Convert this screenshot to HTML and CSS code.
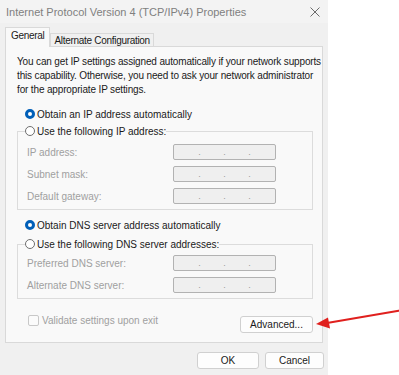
FILE: index.html
```html
<!DOCTYPE html>
<html lang="en">
<head>
    <meta charset="UTF-8">
    <title>Internet Protocol Version 4 (TCP/IPv4) Properties</title>
    <link rel="stylesheet" href="styles.css">
</head>
<body>
    <div class="window">
        <div class="titlebar">
            <span class="title">Internet Protocol Version 4 (TCP/IPv4) Properties</span>
            <svg class="close" width="10" height="10" viewBox="0 0 10 10">
                <path d="M0.5 0.5 L9.5 9.5 M9.5 0.5 L0.5 9.5" stroke="#6b6b6b" stroke-width="1" fill="none"/>
            </svg>
        </div>

        <div class="tabs">
            <div class="tab active">General</div>
            <div class="tab">Alternate Configuration</div>
        </div>

        <div class="panel">
            <p class="intro">You can get IP settings assigned automatically if your network supports<br>this capability. Otherwise, you need to ask your network administrator<br>for the appropriate IP settings.</p>

            <!-- IP address -->
            <div class="option">
                <span class="radio checked"></span>Obtain an IP address automatically
            </div>
            <fieldset class="group">
                <legend><span class="radio"></span>Use the following IP address:</legend>
                <div class="field"><label>IP address:</label><div class="ipbox"><span>.</span><span>.</span><span>.</span></div></div>
                <div class="field"><label>Subnet mask:</label><div class="ipbox"><span>.</span><span>.</span><span>.</span></div></div>
                <div class="field"><label>Default gateway:</label><div class="ipbox"><span>.</span><span>.</span><span>.</span></div></div>
            </fieldset>

            <!-- DNS -->
            <div class="option dns">
                <span class="radio checked"></span>Obtain DNS server address automatically
            </div>
            <fieldset class="group dns-group">
                <legend><span class="radio"></span>Use the following DNS server addresses:</legend>
                <div class="field"><label>Preferred DNS server:</label><div class="ipbox"><span>.</span><span>.</span><span>.</span></div></div>
                <div class="field"><label>Alternate DNS server:</label><div class="ipbox"><span>.</span><span>.</span><span>.</span></div></div>
            </fieldset>

            <div class="footer-row">
                <div class="validate"><span class="checkbox"></span>Validate settings upon exit</div>
                <button class="btn">Advanced...</button>
            </div>
        </div>

        <div class="button-group">
            <button class="btn ok">OK</button>
            <button class="btn cancel">Cancel</button>
        </div>
    </div>

    <svg class="arrow" width="90" height="24" viewBox="0 0 90 24">
        <path d="M88 1 L12 14" stroke="#e0201e" stroke-width="2" fill="none"/>
        <path d="M1 15 L13 8.5 L15 19.5 Z" fill="#e0201e"/>
    </svg>
</body>
</html>
```

FILE: styles.css
```css
body {
    margin: 0;
    background: #ffffff;
    font-family: "Liberation Sans", Arial, sans-serif;
    font-size: 10px;
    color: #1a1a1a;
}
.window {
    width: 328px;
    height: 375px;
    background: #f0f0f0;
    position: relative;
}
.titlebar {
    height: 23px;
    display: flex;
    align-items: center;
    justify-content: space-between;
    padding: 0 8px 0 6px;
    background: #f3f3f3;
    color: #808080;
    font-size: 11px;
}
.close {
    margin-top: 1px;
}
.tabs {
    display: flex;
    align-items: flex-end;
    padding: 4px 5px 0;
    height: 19px;
    letter-spacing: -0.3px;
}
.tab {
    border: 1px solid #d9d9d9;
    border-bottom: none;
    background: #f0f0f0;
    height: 12px;
    line-height: 13px;
    padding: 0 3px;
    color: #1a1a1a;
}
.tab.active {
    background: #f9f9f9;
    height: 19px;
    line-height: 16px;
    padding: 0 5px;
    margin-bottom: -1px;
    position: relative;
    z-index: 1;
}
.panel {
    margin: 0 5px;
    height: 295px;
    border: 1px solid #d9d9d9;
    background: #f9f9f9;
    padding: 0 0 0 11px;
}
.intro {
    margin: 8px 0 0;
    line-height: 14px;
    white-space: nowrap;
    letter-spacing: -0.15px;
}
.option {
    display: flex;
    align-items: center;
    margin: 11px 0 0 8px;
    height: 12px;
}
.option.dns {
    margin-top: 9px;
}
.radio {
    width: 8px;
    height: 8px;
    border: 1px solid #6e6e6e;
    border-radius: 50%;
    background: #ffffff;
    margin-right: 2px;
    display: inline-block;
    box-sizing: content-box;
}
.radio.checked {
    border: 3px solid #005fb8;
    width: 4px;
    height: 4px;
}
.group {
    margin: 5px 0 0;
    padding: 0 0 5px 9px;
    border: 1px solid #dcdcdc;
    width: 296px;
    box-sizing: border-box;
}
.group.dns-group {
    margin-top: 7px;
}
.group legend {
    display: flex;
    align-items: center;
    padding: 0;
    margin-left: -2px;
    height: 12px;
}
.field {
    display: flex;
    align-items: center;
    justify-content: space-between;
    margin-top: 6px;
    color: #a0a0a0;
    padding-right: 36px;
    height: 16px;
}
.field:first-of-type {
    margin-top: 7px;
}
.dns-group .field:first-of-type {
    margin-top: 5px;
}
.ipbox {
    width: 103px;
    height: 16px;
    box-sizing: border-box;
    border: 1px solid #b2b2b2;
    border-radius: 2px;
    background: #efefef;
    display: flex;
    justify-content: center;
    gap: 19px;
    line-height: 14px;
    font-size: 9px;
    color: #9a9a9a;
}
.ipbox span {
    width: 6px;
    text-align: center;
}
.footer-row {
    display: flex;
    align-items: flex-start;
    justify-content: space-between;
    margin-top: 17px;
    padding: 0 9px 0 11px;
}
.validate {
    display: flex;
    align-items: center;
    color: #a0a0a0;
    margin-top: -1px;
}
.checkbox {
    width: 9px;
    height: 9px;
    border: 1px solid #c8c8c8;
    border-radius: 2px;
    margin-right: 3px;
    background: #fbfbfb;
}
.btn {
    font-family: "Liberation Sans", Arial, sans-serif;
    font-size: 10px;
    color: #1a1a1a;
    background: #fdfdfd;
    border: 1px solid #d0d0d0;
    border-radius: 3px;
    height: 17px;
    padding: 0;
    width: 73px;
}
.button-group {
    display: flex;
    justify-content: flex-end;
    gap: 6px;
    padding: 9px 4px 0 0;
}
.button-group .ok {
    width: 62px;
}
.button-group .cancel {
    width: 59px;
}
.arrow {
    position: absolute;
    left: 315px;
    top: 309px;
}
```
